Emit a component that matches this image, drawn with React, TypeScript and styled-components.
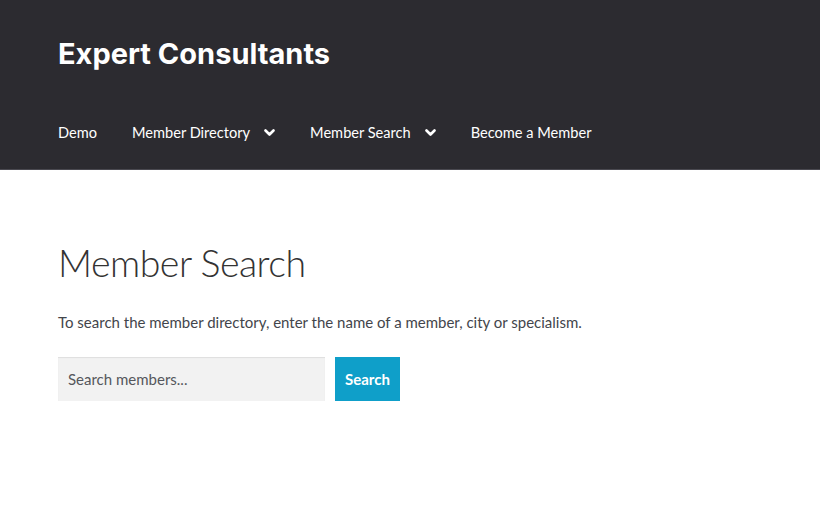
import React from "react";
import styled, { createGlobalStyle } from "styled-components";

const GlobalStyle = createGlobalStyle`
  body {
    margin: 0;
    background: #ffffff;
    font-family: Lato, "Open Sans", sans-serif;
    color: #43454b;
  }
`;

const Header = styled.header`
  background: #2c2b30;
  height: 170px;
  box-sizing: border-box;
  padding: 36px 58px 0;
  border-bottom: 1px solid #4a4950;
`;

const SiteTitle = styled.h1`
  margin: 0;
  font-family: Inter, "Open Sans", sans-serif;
  font-weight: 700;
  font-size: 29px;
  line-height: 36px;
  color: #ffffff;
`;

const Nav = styled.nav`
  display: flex;
  align-items: center;
  margin-top: 51px;
  gap: 35px;
`;

const NavItem = styled.a`
  display: flex;
  align-items: center;
  gap: 14px;
  color: #ffffff;
  font-size: 14.6px;
  line-height: 20px;
  text-decoration: none;
`;

const Chevron = () => (
  <svg width="11" height="8" viewBox="0 0 11 8">
    <path d="M1.5 1.5 L5.5 5.5 L9.5 1.5" stroke="#fff" strokeWidth="2.6" fill="none" strokeLinecap="round" strokeLinejoin="round" />
  </svg>
);

const Main = styled.main`
  padding: 68px 58px 0;
`;

const PageTitle = styled.h2`
  margin: 0;
  font-weight: 300;
  font-size: 37.5px;
  line-height: 50px;
  color: #333333;
  letter-spacing: -0.5px;
`;

const Intro = styled.p`
  margin: 22px 0 0;
  font-size: 15px;
  line-height: 24px;
  color: #43454b;
`;

const SearchForm = styled.form`
  display: flex;
  gap: 10px;
  margin-top: 23px;
`;

const SearchInput = styled.input`
  width: 267px;
  height: 44px;
  box-sizing: border-box;
  border: none;
  background: #f2f2f2;
  box-shadow: inset 0 1px 1px rgba(0, 0, 0, 0.08);
  padding: 0 10px;
  font-family: Lato, "Open Sans", sans-serif;
  font-size: 15px;
  color: #43454b;
  &::placeholder {
    color: #55575c;
  }
`;

const SearchButton = styled.button`
  height: 44px;
  padding: 0 10px;
  border: none;
  background: #0f9fc9;
  color: #ffffff;
  font-family: Lato, "Open Sans", sans-serif;
  font-weight: 700;
  font-size: 15px;
`;

const navItems = [
  { label: "Demo", sub: false },
  { label: "Member Directory", sub: true },
  { label: "Member Search", sub: true },
  { label: "Become a Member", sub: false },
];

export default function App() {
  return (
    <>
      <GlobalStyle />
      <Header>
        <SiteTitle>Expert Consultants</SiteTitle>
        <Nav>
          {navItems.map((item) => (
            <NavItem key={item.label} href="#">
              {item.label}
              {item.sub && <Chevron />}
            </NavItem>
          ))}
        </Nav>
      </Header>
      <Main>
        <PageTitle>Member Search</PageTitle>
        <Intro>To search the member directory, enter the name of a member, city or specialism.</Intro>
        <SearchForm onSubmit={(e) => e.preventDefault()}>
          <SearchInput placeholder="Search members..." />
          <SearchButton type="submit">Search</SearchButton>
        </SearchForm>
      </Main>
    </>
  );
}
